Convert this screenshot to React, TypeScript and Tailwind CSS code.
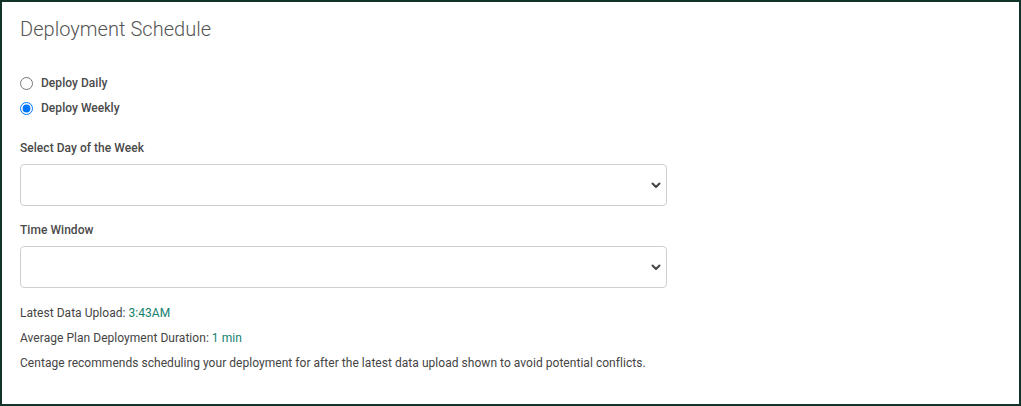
import { FC } from "react";

const Chevron: FC = () => (
	<svg
		className="pointer-events-none absolute right-[6px] top-1/2 -translate-y-1/2"
		width="10"
		height="8"
		viewBox="0 0 10 8"
		fill="none"
	>
		<path d="M1.5 2.5 L5 6 L8.5 2.5" stroke="#444" strokeWidth="2" strokeLinecap="round" strokeLinejoin="round" />
	</svg>
);

const SelectBox: FC<{ label: string; id: string }> = ({ label, id }) => (
	<div className="flex flex-col">
		<label htmlFor={id} className="text-[12px] leading-4 font-medium text-[#4a4a4a]">
			{label}
		</label>
		<div className="relative mt-2 w-[647px]">
			<select
				id={id}
				className="block h-[42px] w-full appearance-none rounded-[4px] border border-[#cfcfcf] bg-white px-3 text-[13px] text-[#444] outline-none"
				defaultValue=""
			>
				<option value="" />
			</select>
			<Chevron />
		</div>
	</div>
);

export default function App() {
	return (
		<div
			className="h-[406px] w-[1021px] border-2 border-[#12332a] bg-white px-[18px] pt-[15px] tracking-[0.04px]"
			style={{ fontFamily: "Roboto, 'Liberation Sans', sans-serif" }}
		>
			<h1 className="text-[20px] leading-6 font-light text-[#555]">Deployment Schedule</h1>

			<div className="mt-[34px] flex flex-col gap-[9px]">
				<label className="flex h-4 items-center gap-2 text-[12px] font-medium text-[#4a4a4a]">
					<input type="radio" name="freq" className="m-0 h-[13px] w-[13px]" />
					Deploy Daily
				</label>
				<label className="flex h-4 items-center gap-2 text-[12px] font-medium text-[#4a4a4a]">
					<input type="radio" name="freq" defaultChecked className="m-0 h-[13px] w-[13px]" />
					Deploy Weekly
				</label>
			</div>

			<div className="mt-6 flex flex-col gap-4">
				<SelectBox label="Select Day of the Week" id="day" />
				<SelectBox label="Time Window" id="window" />
			</div>

			<div className="mt-[17px] flex flex-col gap-[9px] text-[12px] leading-4 text-[#444]">
				<p>
					Latest Data Upload: <span className="text-[#14806f]">3:43AM</span>
				</p>
				<p>
					Average Plan Deployment Duration: <span className="text-[#14806f]">1 min</span>
				</p>
				<p>
					Centage recommends scheduling your deployment for after the latest data upload shown to avoid potential
					conflicts.
				</p>
			</div>
		</div>
	);
}
